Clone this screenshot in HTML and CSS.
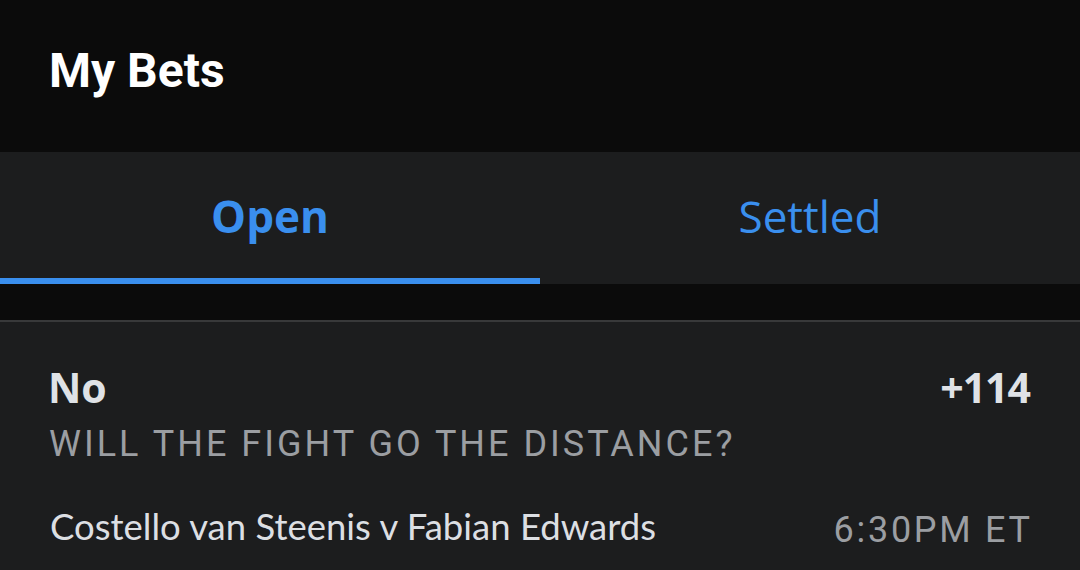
FILE: index.html
```html
<!DOCTYPE html>
<html>
<head>
<meta charset="utf-8">
<link rel="stylesheet" href="styles.css">
</head>
<body>
<div class="page">
  <header class="header"><h1 class="title">My Bets</h1></header>
  <nav class="tabs">
    <div class="tab active">Open</div>
    <div class="tab">Settled</div>
  </nav>
  <div class="gap"></div>
  <section class="card">
    <div class="row top">
      <span class="pick">No</span>
      <span class="odds">+114</span>
    </div>
    <div class="market">WILL THE FIGHT GO THE DISTANCE?</div>
    <div class="row event">
      <span class="match">Costello van Steenis v Fabian Edwards</span>
      <span class="time">6:30PM ET</span>
    </div>
  </section>
</div>
</body>
</html>
```
FILE: styles.css
```css
html, body { margin: 0; padding: 0; background: #0b0b0b; }
.page { width: 1080px; height: 570px; overflow: hidden; background: #0b0b0b; }
.header { height: 152px; display: flex; align-items: center; padding-left: 49px; }
.title { margin: 0; font-family: Roboto, sans-serif; font-weight: 700; font-size: 48px; color: #ffffff; line-height: 1; padding-bottom: 10px; }
.tabs { height: 132px; background: #1c1d1e; display: flex; }
.tab { flex: 1; display: flex; align-items: center; justify-content: center; font-family: "Open Sans", sans-serif; font-size: 44px; color: #3a8fee; box-sizing: border-box; border-bottom: 6px solid transparent; padding-top: 2px; }
.tab.active { font-weight: 700; border-bottom-color: #3a8fee; }
.gap { height: 36px; background: #0b0b0b; border-bottom: 2px solid #38393a; }
.card { background: #1c1d1e; padding: 37px 50px 0 50px; height: 300px; }
.row { display: flex; justify-content: space-between; align-items: baseline; }
.pick, .odds { font-family: "Open Sans", sans-serif; font-weight: 700; font-size: 41px; color: #dfe2e6; line-height: 56px; }
.pick { margin-left: -2px; }
.odds { letter-spacing: -1px; }
.market { font-family: Roboto, sans-serif; font-size: 36px; letter-spacing: 3px; color: #9b9ea2; line-height: 42px; margin-top: 8px; margin-left: -1px; }
.event { margin-top: 36px; align-items: flex-start; }
.match { font-family: Lato, sans-serif; font-size: 36.5px; color: #dcdfe3; line-height: 50px; }
.time { font-family: Roboto, sans-serif; font-size: 36px; letter-spacing: 2.7px; margin-right: -2.7px; margin-top: 4px; color: #9b9ea2; line-height: 50px; }
```
